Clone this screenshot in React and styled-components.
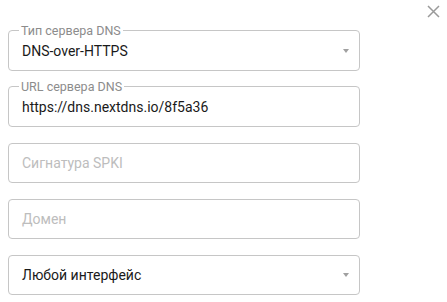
import React from "react";
import styled, { createGlobalStyle } from "styled-components";

const GlobalStyle = createGlobalStyle`
  body {
    margin: 0;
    background: #fff;
    font-family: Roboto, "Noto Sans", sans-serif;
  }
`;

function App() {
  return (
    <>
      <GlobalStyle />
      <Dialog>
        <CloseButton aria-label="close">
          <svg width="13" height="13" viewBox="0 0 13 13">
            <path d="M1 1 L12 12 M12 1 L1 12" stroke="#9a9a9a" strokeWidth="1.5" />
          </svg>
        </CloseButton>
        <Form>
          <Field label="Тип сервера DNS" value="DNS-over-HTTPS" select />
          <Field label="URL сервера DNS" value="https://dns.nextdns.io/8f5a36" />
          <Field placeholder="Сигнатура SPKI" />
          <Field placeholder="Домен" />
          <Field value="Любой интерфейс" select />
        </Form>
      </Dialog>
    </>
  );
}

function Field({ label, value, placeholder, select }) {
  return (
    <Box>
      <Outline $notched={!!label}>{label && <Legend>{label}</Legend>}</Outline>
      <Text $placeholder={!value}>{value || placeholder}</Text>
      {select && <Arrow />}
    </Box>
  );
}

export default App;

const Dialog = styled.div`
  position: relative;
  width: 447px;
  height: 302px;
`;

const CloseButton = styled.div`
  position: absolute;
  top: 5px;
  right: 7px;
  width: 13px;
  height: 13px;
  display: flex;
`;

const Form = styled.div`
  display: flex;
  flex-direction: column;
  gap: 16px;
  padding: 31px 0 0 8px;
  width: 352px;
`;

const Box = styled.div`
  position: relative;
  height: 40px;
  display: flex;
  align-items: center;
  padding: 0 11px 0 14px;
`;

const Outline = styled.fieldset`
  position: absolute;
  inset: ${(p) => (p.$notched ? "-6px" : "0")} 0 0 0;
  margin: 0;
  padding: 0 10px;
  border: 1px solid #c6c6c6;
  border-radius: 4px;
  pointer-events: none;
`;

const Legend = styled.legend`
  padding: 0 2px;
  font-size: 12.5px;
  line-height: 11px;
  color: #8c8c8c;
`;

const Text = styled.div`
  flex: 1;
  font-size: 14px;
  color: ${(p) => (p.$placeholder ? "#bdbdbd" : "#1a1a1a")};
`;

const Arrow = styled.div`
  width: 0;
  height: 0;
  border-left: 3.5px solid transparent;
  border-right: 3.5px solid transparent;
  border-top: 4px solid #a0a0a0;
`;
